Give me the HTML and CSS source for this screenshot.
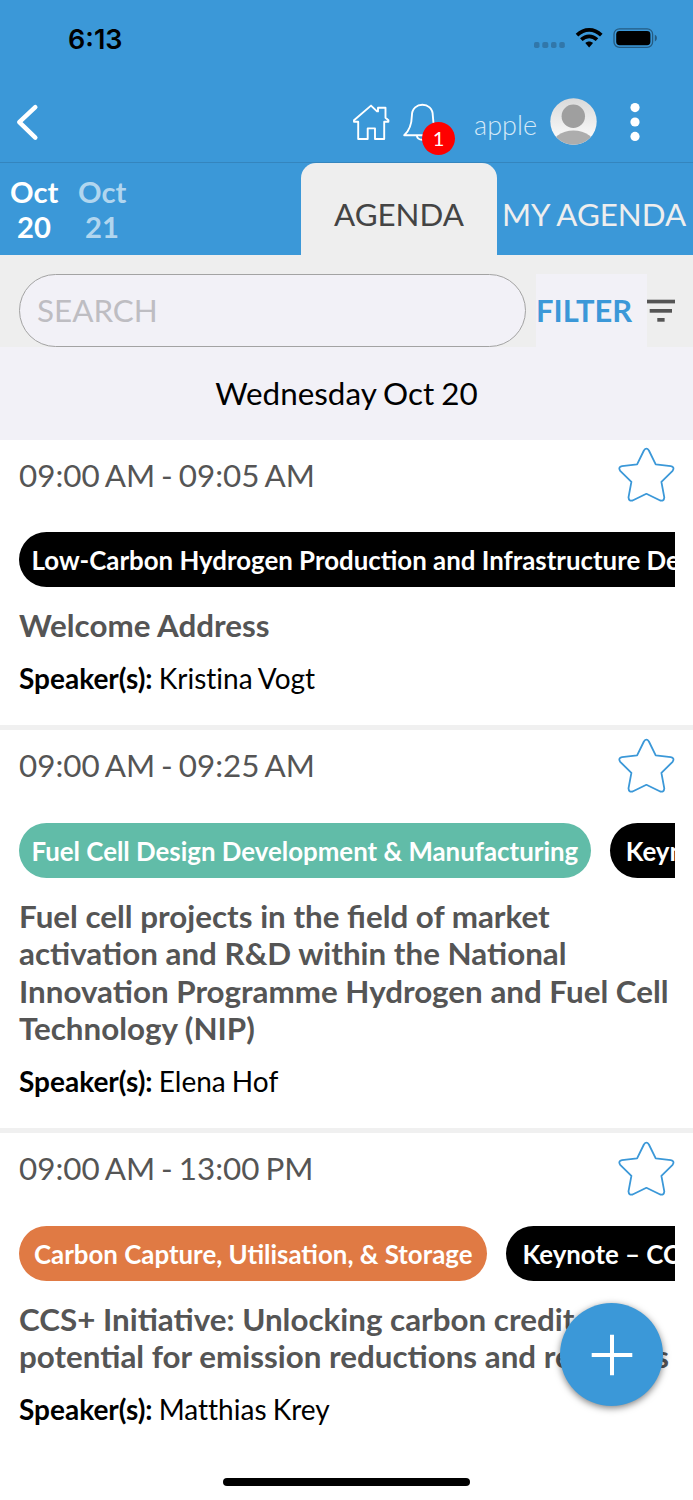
FILE: index.html
```html
<!DOCTYPE html>
<html lang="en">
<head>
  <meta charset="UTF-8" />
  <meta name="viewport" content="width=device-width, initial-scale=1.0"/>
  <title>Agenda</title>
  <link rel="stylesheet" href="styles.css">
</head>
<body>

  <header>
    <div class="status-bar">
      <span class="clock">6:13</span>
      <svg class="status-icons" width="124" height="22" viewBox="0 0 124 22">
        <g fill="#3177aa">
          <rect x="0" y="14" width="5.5" height="6" rx="1.8"/>
          <rect x="8.3" y="14" width="6" height="6" rx="1.8"/>
          <rect x="17" y="14" width="5.5" height="6" rx="1.8"/>
          <rect x="25.3" y="14" width="5.5" height="6" rx="1.8"/>
        </g>
        <g fill="none" stroke="#000" stroke-width="3.7">
          <path d="M43 7.2C50.3 0.2 60 0.2 67.3 7.2"/>
          <path d="M47.3 11.6C52 7.2 58.3 7.2 63 11.6"/>
        </g>
        <path d="M51.3 14.9C53.6 12.9 56.7 12.9 59 14.9L55.15 19.4Z"/>
        <rect x="80" y="0.8" width="38.6" height="18.6" rx="5.4" fill="none" stroke="#255b82" stroke-width="1.3"/>
        <rect x="82.2" y="3" width="34.2" height="14.2" rx="3.4"/>
        <path d="M120.8 6.8C123.6 8 123.6 12.2 120.8 13.4Z" fill="#255b82"/>
      </svg>
    </div>

    <div class="toolbar">
      <svg class="back" width="26" height="38" viewBox="0 0 26 38">
        <path d="M20.3 4.2L4.3 19.2L20.3 34.6" fill="none" stroke="#fff" stroke-width="4.5" stroke-linecap="round" stroke-linejoin="round"/>
      </svg>
      <div class="tools">
        <svg class="home" width="40" height="40" viewBox="0 0 40 40">
          <path d="M20 3.6L3 18.3V19.7H7.2V37H16.7V26.4H24V37H33.2V19.7H37.4V18.3L34.5 15.8V5.8H27V9.4L26 9.4Z" fill="none" stroke="#fff" stroke-width="1.9" stroke-linejoin="round"/>
        </svg>
        <div class="bell">
          <svg width="40" height="40" viewBox="0 0 40 40">
            <path d="M2.2 33.2C7.5 28.5 9.7 22 9.9 13.4C10 -0.9 30.8 -0.9 30.8 13.4C31 22 33 28.5 38 33.2Z" fill="none" stroke="#fff" stroke-width="1.9" stroke-linejoin="round"/>
            <path d="M14.8 33.5C15.5 39.2 25 39.2 26 33.5" fill="none" stroke="#fff" stroke-width="1.9"/>
          </svg>
          <span class="badge">1</span>
        </div>
        <span class="user">apple</span>
        <svg class="avatar" width="47" height="47" viewBox="0 0 47 47">
          <defs>
            <linearGradient id="face" x1="0" y1="0" x2="0" y2="1">
              <stop offset="0" stop-color="#d9d9d9"/>
              <stop offset="1" stop-color="#ffffff"/>
            </linearGradient>
            <clipPath id="round"><circle cx="23.5" cy="23.5" r="23.2"/></clipPath>
          </defs>
          <g clip-path="url(#round)">
            <rect width="47" height="47" fill="url(#face)"/>
            <circle cx="23.3" cy="18.2" r="11.7" fill="#9f9f9f"/>
            <ellipse cx="23.5" cy="49" rx="22" ry="16.5" fill="#adadad"/>
          </g>
        </svg>
        <svg class="more" width="10" height="40" viewBox="0 0 10 40">
          <g fill="#fff">
            <circle cx="5" cy="5.6" r="4.6"/>
            <circle cx="5" cy="20" r="4.6"/>
            <circle cx="5" cy="34.4" r="4.6"/>
          </g>
        </svg>
      </div>
    </div>
  </header>

  <nav>
    <a class="day active" href="#">Oct 20</a>
    <a class="day" href="#">Oct 21</a>
    <a class="tab selected" href="#">AGENDA</a>
    <a class="tab mine" href="#">MY AGENDA</a>
  </nav>

  <div class="search-row">
    <input class="search" type="text" placeholder="SEARCH" />
    <button class="filter">FILTER</button>
    <svg class="filter-icon" width="28" height="24" viewBox="0 0 28 24">
      <g fill="#555">
        <rect x="0" y="0.7" width="28" height="3.7"/>
        <rect x="2.7" y="10" width="22.3" height="3.7"/>
        <rect x="10.3" y="19" width="7.3" height="3.7"/>
      </g>
    </svg>
  </div>

  <h2 class="date">Wednesday Oct 20</h2>

  <main>
    <section class="session">
      <div class="session-top">
        <span class="time">09:00 AM - 09:05 AM</span>
        <svg class="star" width="57" height="56" viewBox="0 0 57 56"><use href="#star"/></svg>
      </div>
      <div class="tags">
        <span class="tag">Low-Carbon Hydrogen Production and Infrastructure Development</span>
      </div>
      <h3>Welcome Address</h3>
      <p class="speaker"><b>Speaker(s):</b> Kristina Vogt</p>
    </section>

    <section class="session">
      <div class="session-top">
        <span class="time">09:00 AM - 09:25 AM</span>
        <svg class="star" width="57" height="56" viewBox="0 0 57 56"><use href="#star"/></svg>
      </div>
      <div class="tags">
        <span class="tag green">Fuel Cell Design Development &amp; Manufacturing</span>
        <span class="tag keynote">Keynote</span>
      </div>
      <h3>Fuel cell projects in the field of market<br>activation and R&amp;D within the National<br>Innovation Programme Hydrogen and Fuel Cell<br>Technology (NIP)</h3>
      <p class="speaker"><b>Speaker(s):</b> Elena Hof</p>
    </section>

    <section class="session">
      <div class="session-top">
        <span class="time">09:00 AM - 13:00 PM</span>
        <svg class="star" width="57" height="56" viewBox="0 0 57 56"><use href="#star"/></svg>
      </div>
      <div class="tags">
        <span class="tag orange">Carbon Capture, Utilisation, &amp; Storage</span>
        <span class="tag keynote">Keynote – CCUS</span>
      </div>
      <h3>CCS+ Initiative: Unlocking carbon credit<br>potential for emission reductions and removals</h3>
      <p class="speaker"><b>Speaker(s):</b> Matthias Krey</p>
    </section>
  </main>

  <button class="add">
    <svg width="42" height="42" viewBox="0 0 42 42">
      <path d="M21 0.7V41.3M0.7 21H41.3" stroke="#fff" stroke-width="4"/>
    </svg>
  </button>
  <div class="home-bar"></div>

  <!-- star outline shared by the session rows -->
  <svg class="symbols" width="0" height="0">
    <symbol id="star" viewBox="0 0 57 56">
      <path d="M25.9 3.5Q28.4 -0.1 30.9 3.5L37.7 17.3L52.8 19.1Q57 20 54.6 23.8L43.4 34.8L46.3 50.4Q46 54.4 42.2 53.5L28.4 46.8L14.6 53.5Q10.8 54.4 10.5 50.4L13.4 34.8L2.2 23.8Q-0.2 20 4 19.1L19.1 17.3Z" fill="none" stroke="#3b98d8" stroke-width="1.8" stroke-linejoin="round"/>
    </symbol>
  </svg>

</body>
</html>
```
FILE: styles.css
```css
* {
  box-sizing: border-box;
}
body {
  font-family: Lato, sans-serif;
  background-color: white;
  margin: 0;
  height: 1500px;
  overflow: hidden;
  position: relative;
}
a {
  text-decoration: none;
}
button {
  border: none;
  padding: 0;
  font-family: inherit;
}
svg {
  display: block;
  flex-shrink: 0;
}

header {
  background-color: #3b98d8;
  height: 163px;
  border-bottom: 1px solid #3485be;
}
.status-bar {
  display: flex;
  justify-content: space-between;
  align-items: center;
  height: 77px;
  padding: 1px 35px 0 68px;
}
.clock {
  font-family: Inter, sans-serif;
  font-size: 27px;
  font-weight: 600;
}
.toolbar {
  display: flex;
  justify-content: space-between;
  align-items: center;
  height: 90px;
  padding: 0 53px 0 15px;
}
.tools {
  display: flex;
  align-items: center;
}
.bell {
  position: relative;
  margin-left: 11px;
}
.badge {
  position: absolute;
  left: 20px;
  top: 20px;
  width: 33px;
  height: 33px;
  border-radius: 50%;
  background-color: red;
  color: white;
  font-size: 20px;
  line-height: 33px;
  text-align: center;
}
.user {
  color: #d5e9f7;
  font-size: 27px;
  font-weight: 300;
  margin: 5px 13px 0 32px;
}
.avatar {
  margin-top: -2px;
}
.more {
  margin-left: 33px;
}

nav {
  display: flex;
  height: 92px;
  background-color: #3b98d8;
}
.day {
  width: 68px;
  padding: 11px 10px 0;
  color: #b1d6ef;
  font-size: 29.2px;
  font-weight: bold;
  line-height: 35px;
  text-align: center;
}
.active {
  color: white;
}
.tab {
  color: #eee;
  font-size: 31.3px;
  line-height: 102px;
  white-space: nowrap;
}
.selected {
  width: 196px;
  margin-left: auto;
  background-color: #eee;
  color: #444;
  border-radius: 15px 15px 0 0;
  text-align: center;
}
.mine {
  width: 196px;
  padding-left: 5px;
}

.search-row {
  display: flex;
  height: 92px;
  padding: 19px 18px 0 19px;
  background-color: #eee;
}
.search {
  width: 507px;
  height: 73px;
  padding: 0 17px 2px;
  border: 1px solid #a3a3a3;
  border-radius: 37px;
  background-color: #f2f1f7;
  font-family: inherit;
  font-size: 31.4px;
}
.search::placeholder {
  color: #bebdc2;
}
.filter {
  width: 111px;
  margin-left: 10px;
  padding: 0;
  background-color: #f2f1f7;
  color: #3b98d8;
  font-size: 30.9px;
  font-weight: bold;
  text-align: left;
}
.filter-icon {
  margin-top: 25px;
}

.date {
  height: 93px;
  margin: 0;
  background-color: #f2f1f7;
  font-size: 31.4px;
  font-weight: normal;
  line-height: 93px;
  text-align: center;
  word-spacing: -1px;
}

.session {
  padding: 0 18px 29px 19px;
  border-bottom: 5px solid #f0f0f0;
}
.session + .session {
  padding-top: 1px;
}
.session:last-child {
  border-bottom: none;
}
.session-top {
  display: flex;
  justify-content: space-between;
  align-items: center;
  height: 70px;
}
.time {
  color: #555;
  font-size: 31.4px;
  word-spacing: -2px;
  margin-bottom: 1px;
}
.tags {
  display: flex;
  gap: 19px;
  margin-top: 22px;
  overflow: hidden;
}
.tag {
  flex-shrink: 0;
  height: 55px;
  padding: 0 12.5px;
  border-radius: 28px;
  background-color: black;
  color: white;
  font-size: 25.85px;
  font-weight: bold;
  line-height: 57px;
  white-space: nowrap;
}
.green {
  background-color: #61bca8;
}
.orange {
  background-color: #e07a44;
  padding: 0 15px;
}
.keynote {
  padding: 0 16px;
}
h3 {
  margin: 20px 0 0;
  color: #555;
  font-size: 31.35px;
  font-weight: bold;
  line-height: 37.5px;
  white-space: nowrap;
}
.speaker {
  margin: 16px 0 0;
  padding-bottom: 1px;
  font-size: 28px;
  line-height: 34px;
  word-spacing: -1px;
  font-variant-ligatures: none;
}

.add {
  position: absolute;
  left: 560px;
  top: 1303px;
  display: flex;
  justify-content: center;
  align-items: center;
  width: 103px;
  height: 103px;
  border-radius: 50%;
  background-color: #3b98d8;
  box-shadow: 0 2px 7px rgba(0, 0, 0, 0.5);
}
.home-bar {
  position: absolute;
  left: 223px;
  top: 1478px;
  width: 247px;
  height: 8px;
  border-radius: 4px;
  background-color: black;
}
.symbols {
  position: absolute;
}
```
